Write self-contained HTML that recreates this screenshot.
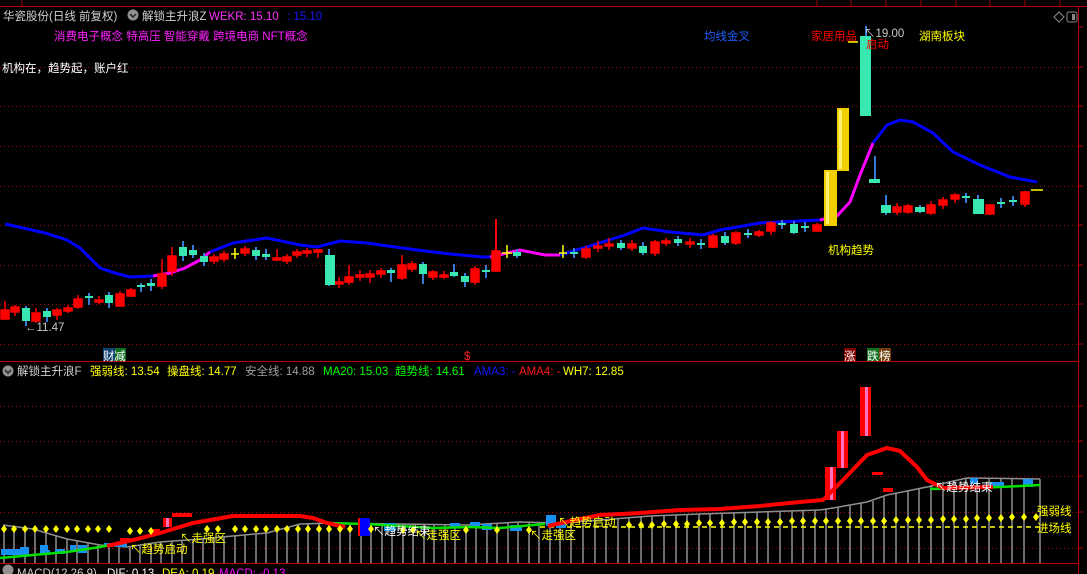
<!DOCTYPE html>
<html><head><meta charset="utf-8"><style>
html,body{margin:0;padding:0;background:#000;width:1087px;height:574px;overflow:hidden}
svg{display:block}
text{font-family:"Liberation Sans","Noto Sans CJK SC","WenQuanYi Zen Hei",sans-serif;font-size:11.5px}
</style></head><body>
<svg width="1087" height="574" viewBox="0 0 1087 574" xmlns="http://www.w3.org/2000/svg">
<rect x="0" y="0" width="1087" height="6" fill="#050505"/>
<line x1="0" y1="6.5" x2="1087" y2="6.5" stroke="#c00000" stroke-width="1"/>
<g stroke="#a00000"><line x1="22" y1="0" x2="22" y2="6"/><line x1="817" y1="0" x2="817" y2="6"/><line x1="851" y1="0" x2="851" y2="6"/><line x1="886" y1="0" x2="886" y2="6"/><line x1="921" y1="0" x2="921" y2="6"/><line x1="956" y1="0" x2="956" y2="6"/><line x1="990" y1="0" x2="990" y2="6"/><line x1="1025" y1="0" x2="1025" y2="6"/><line x1="1060" y1="0" x2="1060" y2="6"/></g>
<line x1="1078.5" y1="7" x2="1078.5" y2="574" stroke="#c00000"/>
<g stroke="#c00000"><line x1="1078" y1="27" x2="1083" y2="27"/><line x1="1078" y1="67" x2="1083" y2="67"/><line x1="1078" y1="106" x2="1083" y2="106"/><line x1="1078" y1="146" x2="1083" y2="146"/><line x1="1078" y1="186" x2="1083" y2="186"/><line x1="1078" y1="225" x2="1083" y2="225"/><line x1="1078" y1="265" x2="1083" y2="265"/><line x1="1078" y1="304" x2="1083" y2="304"/><line x1="1078" y1="344" x2="1083" y2="344"/><line x1="1078" y1="406" x2="1083" y2="406"/><line x1="1078" y1="441" x2="1083" y2="441"/><line x1="1078" y1="476" x2="1083" y2="476"/><line x1="1078" y1="512" x2="1083" y2="512"/><line x1="1078" y1="548" x2="1083" y2="548"/></g>
<g stroke="#a00000" stroke-dasharray="1,3">
<line x1="0" y1="67.5" x2="1078" y2="67.5"/><line x1="0" y1="106.5" x2="1078" y2="106.5"/><line x1="0" y1="146.5" x2="1078" y2="146.5"/><line x1="0" y1="186.5" x2="1078" y2="186.5"/><line x1="0" y1="225.5" x2="1078" y2="225.5"/><line x1="0" y1="265.5" x2="1078" y2="265.5"/><line x1="0" y1="304.5" x2="1078" y2="304.5"/><line x1="0" y1="344.5" x2="1078" y2="344.5"/>
<line x1="0" y1="406.5" x2="1078" y2="406.5"/><line x1="0" y1="441.5" x2="1078" y2="441.5"/><line x1="0" y1="476.5" x2="1078" y2="476.5"/><line x1="0" y1="512.5" x2="1078" y2="512.5"/><line x1="0" y1="548.5" x2="1078" y2="548.5"/>
</g>
<line x1="0" y1="361.5" x2="1078" y2="361.5" stroke="#c00000"/>
<line x1="0" y1="563.5" x2="1078" y2="563.5" stroke="#c00000"/>

<polyline fill="none" stroke="#0000ff" stroke-width="3" points="5,224 23,228 45,233 67,240 80,248 100,268 115,273 130,277 153,276"/>
<polyline fill="none" stroke="#ff00ff" stroke-width="3" points="153,276 170,273 185,268 200,260 210,252"/>
<polyline fill="none" stroke="#0000ff" stroke-width="3" points="210,252 233,243 267,238 300,245 317,247 340,241 367,243 417,250 450,254 483,257 490,257"/>
<polyline fill="none" stroke="#ff00ff" stroke-width="3" points="490,257 520,250 545,255 560,255"/>
<polyline fill="none" stroke="#0000ff" stroke-width="3" points="560,255 593,245 625,235 643,228 670,232 703,235 720,230 760,223 800,221 820,220"/>
<polyline fill="none" stroke="#ff00ff" stroke-width="3" points="820,220 837,216 850,202 860,175 873,143"/>
<polyline fill="none" stroke="#0000ff" stroke-width="3" points="873,143 887,125 900,120 913,122 933,133 953,152 980,165 1010,177 1037,182"/>

<g>
<g fill="#ff0000" stroke="#ff0000" stroke-width="1.5">
<line x1="5" y1="301" x2="5" y2="320"/><rect x="1" y="310" width="8" height="9"/>
<line x1="15" y1="305" x2="15" y2="316"/><rect x="11" y="307" width="8" height="5"/>
<line x1="36" y1="308" x2="36" y2="323"/><rect x="32" y="313" width="8" height="8"/>
<line x1="57" y1="308" x2="57" y2="320"/><rect x="53" y="310" width="8" height="5"/>
<line x1="68" y1="305" x2="68" y2="313"/><rect x="64" y="308" width="8" height="3"/>
<line x1="78" y1="295" x2="78" y2="309"/><rect x="74" y="299" width="8" height="8"/>
<line x1="99" y1="296" x2="99" y2="304"/><rect x="95" y="300" width="8" height="2"/>
<line x1="120" y1="291" x2="120" y2="307"/><rect x="116" y="294" width="8" height="12"/>
<line x1="131" y1="288" x2="131" y2="297"/><rect x="127" y="290" width="8" height="6"/>
<line x1="162" y1="259" x2="162" y2="289"/><rect x="158" y="274" width="8" height="12"/>
<line x1="172" y1="247" x2="172" y2="276"/><rect x="168" y="256" width="8" height="15"/>
<line x1="214" y1="254" x2="214" y2="264"/><rect x="210" y="257" width="8" height="4"/>
<line x1="224" y1="251" x2="224" y2="262"/><rect x="220" y="254" width="8" height="5"/>
<line x1="245" y1="246" x2="245" y2="256"/><rect x="241" y="249" width="8" height="4"/>
<line x1="277" y1="249" x2="277" y2="261"/><rect x="273" y="258" width="8" height="2"/>
<line x1="287" y1="254" x2="287" y2="264"/><rect x="283" y="257" width="8" height="4"/>
<line x1="297" y1="249" x2="297" y2="258"/><rect x="293" y="252" width="8" height="3"/>
<line x1="307" y1="248" x2="307" y2="257"/><rect x="303" y="251" width="8" height="2"/>
<line x1="318" y1="249" x2="318" y2="258"/><rect x="314" y="250" width="8" height="2"/>
<line x1="339" y1="277" x2="339" y2="288"/><rect x="335" y="282" width="8" height="2"/>
<line x1="349" y1="265" x2="349" y2="285"/><rect x="345" y="277" width="8" height="5"/>
<line x1="360" y1="270" x2="360" y2="281"/><rect x="356" y="275" width="8" height="2"/>
<line x1="370" y1="270" x2="370" y2="283"/><rect x="366" y="274" width="8" height="3"/>
<line x1="381" y1="268" x2="381" y2="278"/><rect x="377" y="271" width="8" height="3"/>
<line x1="402" y1="255" x2="402" y2="280"/><rect x="398" y="265" width="8" height="13"/>
<line x1="412" y1="261" x2="412" y2="272"/><rect x="408" y="264" width="8" height="5"/>
<line x1="433" y1="270" x2="433" y2="280"/><rect x="429" y="272" width="8" height="5"/>
<line x1="444" y1="271" x2="444" y2="279"/><rect x="440" y="275" width="8" height="2"/>
<line x1="475" y1="266" x2="475" y2="285"/><rect x="471" y="269" width="8" height="13"/>
<line x1="496" y1="219" x2="496" y2="272"/><rect x="492" y="251" width="8" height="20"/>
<line x1="586" y1="246" x2="586" y2="259"/><rect x="582" y="249" width="8" height="8"/>
<line x1="598" y1="241" x2="598" y2="252"/><rect x="594" y="246" width="8" height="2"/>
<line x1="609" y1="238" x2="609" y2="250"/><rect x="605" y="244" width="8" height="2"/>
<line x1="632" y1="240" x2="632" y2="251"/><rect x="628" y="244" width="8" height="4"/>
<line x1="655" y1="240" x2="655" y2="256"/><rect x="651" y="242" width="8" height="11"/>
<line x1="666" y1="238" x2="666" y2="246"/><rect x="662" y="241" width="8" height="2"/>
<line x1="690" y1="238" x2="690" y2="248"/><rect x="686" y="242" width="8" height="2"/>
<line x1="713" y1="234" x2="713" y2="248"/><rect x="709" y="236" width="8" height="11"/>
<line x1="736" y1="231" x2="736" y2="245"/><rect x="732" y="233" width="8" height="10"/>
<line x1="759" y1="230" x2="759" y2="237"/><rect x="755" y="232" width="8" height="3"/>
<line x1="771" y1="221" x2="771" y2="235"/><rect x="767" y="223" width="8" height="8"/>
<line x1="817" y1="223" x2="817" y2="228"/><rect x="813" y="225" width="8" height="6"/>
<line x1="897" y1="203" x2="897" y2="215"/><rect x="893" y="207" width="8" height="5"/>
<line x1="908" y1="204" x2="908" y2="214"/><rect x="904" y="206" width="8" height="6"/>
<line x1="931" y1="201" x2="931" y2="215"/><rect x="927" y="205" width="8" height="8"/>
<line x1="943" y1="197" x2="943" y2="209"/><rect x="939" y="200" width="8" height="5"/>
<line x1="955" y1="193" x2="955" y2="203"/><rect x="951" y="195" width="8" height="4"/>
<line x1="990" y1="204" x2="990" y2="215"/><rect x="986" y="205" width="8" height="9"/>
<line x1="1025" y1="191" x2="1025" y2="207"/><rect x="1021" y="192" width="8" height="12"/>
</g>
<line x1="496" y1="219" x2="496" y2="251" stroke="#ff0000" stroke-width="2"/>
<g stroke="#3878d8" stroke-width="2">
<line x1="26" y1="306" x2="26" y2="326"/><line x1="47" y1="308" x2="47" y2="322"/><line x1="89" y1="293" x2="89" y2="305"/><line x1="109" y1="292" x2="109" y2="308"/><line x1="141" y1="283" x2="141" y2="292"/><line x1="151" y1="279" x2="151" y2="291"/><line x1="183" y1="241" x2="183" y2="261"/><line x1="193" y1="245" x2="193" y2="258"/><line x1="204" y1="253" x2="204" y2="266"/><line x1="256" y1="247" x2="256" y2="260"/><line x1="266" y1="249" x2="266" y2="260"/><line x1="329" y1="249" x2="329" y2="286"/><line x1="391" y1="268" x2="391" y2="282"/><line x1="423" y1="262" x2="423" y2="284"/><line x1="454" y1="264" x2="454" y2="277"/><line x1="465" y1="273" x2="465" y2="287"/><line x1="486" y1="265" x2="486" y2="278"/><line x1="517" y1="249" x2="517" y2="258"/><line x1="574" y1="248" x2="574" y2="258"/><line x1="621" y1="240" x2="621" y2="250"/><line x1="643" y1="242" x2="643" y2="255"/><line x1="678" y1="236" x2="678" y2="246"/><line x1="701" y1="239" x2="701" y2="249"/><line x1="725" y1="232" x2="725" y2="245"/><line x1="748" y1="229" x2="748" y2="238"/><line x1="782" y1="220" x2="782" y2="229"/><line x1="794" y1="221" x2="794" y2="234"/><line x1="805" y1="222" x2="805" y2="232"/><line x1="866" y1="26" x2="866" y2="116"/><line x1="875" y1="156" x2="875" y2="183"/><line x1="886" y1="195" x2="886" y2="215"/><line x1="920" y1="205" x2="920" y2="213"/><line x1="966" y1="193" x2="966" y2="203"/><line x1="978" y1="195" x2="978" y2="214"/><line x1="1001" y1="198" x2="1001" y2="208"/><line x1="1013" y1="196" x2="1013" y2="206"/>
</g>
<g fill="#38e8b0">
<rect x="22" y="308" width="8" height="13"/><rect x="43" y="311" width="8" height="6"/><rect x="85" y="296" width="8" height="2"/><rect x="105" y="295" width="8" height="8"/><rect x="137" y="285" width="8" height="2"/><rect x="147" y="283" width="8" height="3"/><rect x="179" y="247" width="8" height="9"/><rect x="189" y="250" width="8" height="5"/><rect x="200" y="256" width="8" height="6"/><rect x="252" y="250" width="8" height="6"/><rect x="262" y="254" width="8" height="3"/><rect x="325" y="255" width="10" height="30"/><rect x="387" y="270" width="8" height="3"/><rect x="419" y="264" width="8" height="10"/><rect x="450" y="272" width="8" height="4"/><rect x="461" y="276" width="8" height="6"/><rect x="482" y="270" width="8" height="2"/><rect x="513" y="252" width="8" height="4"/><rect x="570" y="252" width="8" height="2"/><rect x="617" y="243" width="8" height="5"/><rect x="639" y="246" width="8" height="7"/><rect x="674" y="239" width="8" height="4"/><rect x="697" y="243" width="8" height="2"/><rect x="721" y="236" width="8" height="7"/><rect x="744" y="233" width="8" height="2"/><rect x="778" y="223" width="8" height="2"/><rect x="790" y="224" width="8" height="9"/><rect x="801" y="226" width="8" height="2"/><rect x="860" y="36" width="11" height="80"/><rect x="869" y="179" width="11" height="4"/><rect x="881" y="205" width="10" height="8"/><rect x="915" y="207" width="10" height="5"/><rect x="962" y="196" width="8" height="2"/><rect x="973" y="199" width="11" height="15"/><rect x="997" y="202" width="8" height="2"/><rect x="1009" y="200" width="8" height="2"/>
</g>
<g stroke="#ffff00" stroke-width="1.5"><line x1="235" y1="248" x2="235" y2="259"/><line x1="231" y1="254" x2="239" y2="254"/><line x1="507" y1="245" x2="507" y2="258"/><line x1="502" y1="253" x2="512" y2="253"/><line x1="563" y1="245" x2="563" y2="258"/><line x1="559" y1="253" x2="567" y2="253"/><line x1="1031" y1="190" x2="1043" y2="190"/></g>
<rect x="824" y="170" width="13" height="56" fill="#f0d000"/>
<rect x="837" y="108" width="12" height="63" fill="#f0d000"/>
<rect x="826" y="172" width="3" height="52" fill="#fff070"/>
<rect x="839" y="110" width="3" height="59" fill="#fff070"/>
</g>

<text x="3" y="20" fill="#d0d0d0">华瓷股份(日线 前复权)</text>
<circle cx="133" cy="15" r="5.5" fill="#909090"/><path d="M130 14 l3 3 l3 -3" stroke="#222" fill="none" stroke-width="1.5"/>
<text x="142" y="20" fill="#d0d0d0">解锁主升浪Z</text>
<text x="209" y="20" fill="#ff30ff">WEKR: 15.10</text>
<text x="287" y="20" fill="#1818ff">: 15.10</text>
<text x="54" y="40" fill="#ff20ff">消费电子概念 特高压 智能穿戴 跨境电商 NFT概念</text>
<text x="2" y="72" fill="#ffffff">机构在，趋势起，账户红</text>
<text x="704" y="40" fill="#2060ff">均线金叉</text>
<text x="811" y="40" fill="#ff0000">家居用品</text>
<text x="864" y="37" fill="#c8c8c8">↖19.00</text>
<text x="866" y="48" fill="#ff0000">启动</text>
<line x1="848" y1="42" x2="858" y2="42" stroke="#ffff00" stroke-width="1.5"/>
<text x="919" y="40" fill="#ffff00">湖南板块</text>
<text x="828" y="254" fill="#ffff00">机构趋势</text>
<text x="25" y="331" fill="#c8c8c8">←11.47</text>
<path d="M1054 17 l5 -5 l5 5 l-5 5z" fill="none" stroke="#888" stroke-width="1"/>
<rect x="1067" y="12" width="10" height="10" rx="2" fill="none" stroke="#888"/><rect x="1072" y="14" width="3" height="6" fill="#888"/>
<rect x="103" y="348" width="12" height="13" fill="#104070"/><text x="103" y="360" fill="#fff" style="font-size:11.5px">财</text>
<rect x="115" y="348" width="11" height="13" fill="#107020"/><text x="114" y="360" fill="#fff" style="font-size:11.5px">减</text>
<text x="464" y="360" fill="#ff2020">$</text>
<rect x="844" y="348" width="12" height="13" fill="#800000"/><text x="844" y="360" fill="#fff">涨</text>
<rect x="867" y="348" width="12" height="13" fill="#107020"/><text x="867" y="360" fill="#fff">跌</text>
<rect x="879" y="348" width="12" height="13" fill="#704010"/><text x="879" y="360" fill="#fff">榜</text>

<circle cx="8" cy="371" r="5.5" fill="#909090"/><path d="M5 370 l3 3 l3 -3" stroke="#222" fill="none" stroke-width="1.5"/>
<text x="17" y="375" fill="#d0d0d0">解锁主升浪F</text>
<text x="90" y="375" fill="#ffff00">强弱线: 13.54</text>
<text x="167" y="375" fill="#ffff00">操盘线: 14.77</text>
<text x="245" y="375" fill="#a0a0a0">安全线: 14.88</text>
<text x="323" y="375" fill="#00ff00">MA20: 15.03</text>
<text x="395" y="375" fill="#00ff00">趋势线: 14.61</text>
<text x="474" y="375" fill="#1818ff">AMA3: -</text>
<text x="519" y="375" fill="#ff1818">AMA4: -</text>
<text x="563" y="375" fill="#ffff00">WH7: 12.85</text>

<g stroke="#909090" stroke-width="1.5">
<line x1="4" y1="525" x2="4" y2="563"/><line x1="14" y1="526" x2="14" y2="563"/><line x1="25" y1="528" x2="25" y2="563"/><line x1="35" y1="529" x2="35" y2="563"/><line x1="46" y1="532" x2="46" y2="563"/><line x1="56" y1="535" x2="56" y2="563"/><line x1="67" y1="539" x2="67" y2="563"/><line x1="77" y1="541" x2="77" y2="563"/><line x1="88" y1="543" x2="88" y2="563"/><line x1="98" y1="545" x2="98" y2="563"/><line x1="109" y1="546" x2="109" y2="563"/><line x1="119" y1="547" x2="119" y2="563"/><line x1="130" y1="547" x2="130" y2="563"/><line x1="140" y1="545" x2="140" y2="563"/><line x1="151" y1="544" x2="151" y2="563"/><line x1="161" y1="542" x2="161" y2="563"/><line x1="172" y1="541" x2="172" y2="563"/><line x1="182" y1="540" x2="182" y2="563"/><line x1="193" y1="539" x2="193" y2="563"/><line x1="203" y1="539" x2="203" y2="563"/><line x1="214" y1="538" x2="214" y2="563"/><line x1="224" y1="537" x2="224" y2="563"/><line x1="235" y1="536" x2="235" y2="563"/><line x1="245" y1="535" x2="245" y2="563"/><line x1="256" y1="534" x2="256" y2="563"/><line x1="266" y1="533" x2="266" y2="563"/><line x1="277" y1="531" x2="277" y2="563"/><line x1="287" y1="528" x2="287" y2="563"/><line x1="298" y1="525" x2="298" y2="563"/><line x1="308" y1="524" x2="308" y2="563"/><line x1="319" y1="523" x2="319" y2="563"/><line x1="329" y1="523" x2="329" y2="563"/><line x1="340" y1="523" x2="340" y2="563"/><line x1="350" y1="524" x2="350" y2="563"/><line x1="361" y1="524" x2="361" y2="563"/><line x1="371" y1="524" x2="371" y2="563"/><line x1="382" y1="524" x2="382" y2="563"/><line x1="392" y1="524" x2="392" y2="563"/><line x1="403" y1="524" x2="403" y2="563"/><line x1="413" y1="524" x2="413" y2="563"/><line x1="424" y1="524" x2="424" y2="563"/><line x1="434" y1="525" x2="434" y2="563"/><line x1="445" y1="525" x2="445" y2="563"/><line x1="455" y1="525" x2="455" y2="563"/><line x1="466" y1="525" x2="466" y2="563"/><line x1="476" y1="525" x2="476" y2="563"/><line x1="487" y1="525" x2="487" y2="563"/><line x1="497" y1="524" x2="497" y2="563"/><line x1="508" y1="523" x2="508" y2="563"/><line x1="518" y1="522" x2="518" y2="563"/><line x1="529" y1="522" x2="529" y2="563"/><line x1="539" y1="522" x2="539" y2="563"/><line x1="550" y1="522" x2="550" y2="563"/><line x1="560" y1="523" x2="560" y2="563"/><line x1="571" y1="523" x2="571" y2="563"/><line x1="583" y1="522" x2="583" y2="563"/><line x1="595" y1="521" x2="595" y2="563"/><line x1="606" y1="520" x2="606" y2="563"/><line x1="618" y1="519" x2="618" y2="563"/><line x1="629" y1="518" x2="629" y2="563"/><line x1="641" y1="517" x2="641" y2="563"/><line x1="652" y1="516" x2="652" y2="563"/><line x1="664" y1="515" x2="664" y2="563"/><line x1="676" y1="515" x2="676" y2="563"/><line x1="687" y1="514" x2="687" y2="563"/><line x1="699" y1="514" x2="699" y2="563"/><line x1="710" y1="513" x2="710" y2="563"/><line x1="722" y1="513" x2="722" y2="563"/><line x1="734" y1="513" x2="734" y2="563"/><line x1="745" y1="512" x2="745" y2="563"/><line x1="757" y1="512" x2="757" y2="563"/><line x1="768" y1="512" x2="768" y2="563"/><line x1="780" y1="511" x2="780" y2="563"/><line x1="792" y1="511" x2="792" y2="563"/><line x1="803" y1="510" x2="803" y2="563"/><line x1="815" y1="510" x2="815" y2="563"/><line x1="826" y1="509" x2="826" y2="563"/><line x1="838" y1="508" x2="838" y2="563"/><line x1="850" y1="506" x2="850" y2="563"/><line x1="861" y1="503" x2="861" y2="563"/><line x1="873" y1="501" x2="873" y2="563"/><line x1="884" y1="497" x2="884" y2="563"/><line x1="896" y1="493" x2="896" y2="563"/><line x1="908" y1="490" x2="908" y2="563"/><line x1="919" y1="488" x2="919" y2="563"/><line x1="931" y1="485" x2="931" y2="563"/><line x1="943" y1="482" x2="943" y2="563"/><line x1="954" y1="480" x2="954" y2="563"/><line x1="966" y1="478" x2="966" y2="563"/><line x1="977" y1="478" x2="977" y2="563"/><line x1="989" y1="478" x2="989" y2="563"/><line x1="1001" y1="478" x2="1001" y2="563"/><line x1="1012" y1="478" x2="1012" y2="563"/><line x1="1024" y1="479" x2="1024" y2="563"/><line x1="1040" y1="479" x2="1040" y2="563"/>
</g>
<polyline fill="none" stroke="#909090" stroke-width="1.5" points="3,525 33,529 67,539 100,545 127,547 160,542 200,539 233,536 267,533 300,524 333,523 400,524 467,525 520,522 560,523 600,520 650,516 700,514 760,512 820,510 833,508 867,502 887,495 927,487 967,478 1040,479"/>
<line x1="540" y1="527" x2="1040" y2="527" stroke="#ffff00" stroke-width="1.5" stroke-dasharray="5,4"/>
<g fill="#1890f0">
<rect x="1" y="549" width="20" height="6"/><rect x="20" y="547" width="9" height="8"/><rect x="40" y="550" width="10" height="5"/><rect x="55" y="549" width="10" height="5"/><rect x="70" y="545" width="6" height="5"/><rect x="78" y="545" width="9" height="8"/><rect x="104" y="543" width="8" height="4"/><rect x="115" y="542" width="12" height="5"/><rect x="40" y="545" width="8" height="6"/>
<rect x="384" y="523" width="12" height="8"/><rect x="450" y="523" width="10" height="5"/><rect x="470" y="522" width="10" height="5"/><rect x="482" y="524" width="10" height="6"/><rect x="510" y="525" width="12" height="6"/><rect x="546" y="515" width="10" height="11"/><rect x="556" y="524" width="10" height="4"/>
<rect x="970" y="478" width="8" height="6"/><rect x="990" y="482" width="14" height="4"/><rect x="1023" y="479" width="10" height="8"/>
</g>
<polyline fill="none" stroke="#00e000" stroke-width="2.5" points="0,558 33,555 67,552 100,547 110,545"/>
<polyline fill="none" stroke="#00e000" stroke-width="2.5" points="327,523 367,524 400,526 433,528 470,527 500,528 545,524"/>
<polyline fill="none" stroke="#00e000" stroke-width="2.5" points="930,489 965,488 1000,487 1040,485"/>
<g fill="#ff0000">
<rect x="120" y="538" width="10" height="5"/><rect x="152" y="529" width="8" height="6"/><rect x="163" y="518" width="9" height="9"/><rect x="172" y="513" width="10" height="4"/><rect x="182" y="513" width="10" height="4"/>
<rect x="825" y="467" width="11" height="33"/><rect x="837" y="431" width="11" height="37"/><rect x="860" y="387" width="11" height="49"/><rect x="872" y="472" width="11" height="3"/><rect x="883" y="488" width="10" height="4"/>
</g>
<g fill="#ff70c0"><rect x="865" y="387" width="3" height="49"/><rect x="830" y="467" width="3" height="33"/><rect x="841" y="431" width="3" height="37"/><rect x="166" y="518" width="3" height="9"/></g>
<rect x="360" y="518" width="10" height="18" fill="#0000ff"/><rect x="358" y="518" width="2" height="18" fill="#ff0000"/>
<polyline fill="none" stroke="#ff0000" stroke-width="4" points="107,546 133,540 160,533 193,523 233,516 300,516 313,518 327,523 345,527"/>
<polyline fill="none" stroke="#ff0000" stroke-width="4" points="548,526 575,520 600,515 640,513 680,510 720,509 760,506 800,502 823,500 843,480 867,455 887,448 900,451 917,467 927,480 943,488 993,487"/>
<g fill="#ffff00">
<path d="M4 525l3 4l-3 4l-3-4z"/><path d="M14 525l3 4l-3 4l-3-4z"/><path d="M25 525l3 4l-3 4l-3-4z"/><path d="M35 525l3 4l-3 4l-3-4z"/><path d="M46 525l3 4l-3 4l-3-4z"/><path d="M56 525l3 4l-3 4l-3-4z"/><path d="M67 525l3 4l-3 4l-3-4z"/><path d="M77 525l3 4l-3 4l-3-4z"/><path d="M88 525l3 4l-3 4l-3-4z"/><path d="M98 525l3 4l-3 4l-3-4z"/><path d="M109 525l3 4l-3 4l-3-4z"/><path d="M130 527l3 4l-3 4l-3-4z"/><path d="M140 527l3 4l-3 4l-3-4z"/><path d="M151 527l3 4l-3 4l-3-4z"/><path d="M207 525l3 4l-3 4l-3-4z"/><path d="M218 525l3 4l-3 4l-3-4z"/><path d="M235 525l3 4l-3 4l-3-4z"/><path d="M245 525l3 4l-3 4l-3-4z"/><path d="M256 525l3 4l-3 4l-3-4z"/><path d="M266 525l3 4l-3 4l-3-4z"/><path d="M277 525l3 4l-3 4l-3-4z"/><path d="M287 525l3 4l-3 4l-3-4z"/><path d="M298 525l3 4l-3 4l-3-4z"/><path d="M308 525l3 4l-3 4l-3-4z"/><path d="M319 525l3 4l-3 4l-3-4z"/><path d="M329 525l3 4l-3 4l-3-4z"/><path d="M340 525l3 4l-3 4l-3-4z"/><path d="M350 525l3 4l-3 4l-3-4z"/><path d="M371 525l3 4l-3 4l-3-4z"/><path d="M403 526l3 4l-3 4l-3-4z"/><path d="M413 526l3 4l-3 4l-3-4z"/><path d="M466 526l3 4l-3 4l-3-4z"/><path d="M497 526l3 4l-3 4l-3-4z"/><path d="M529 526l3 4l-3 4l-3-4z"/>
<path d="M629 521l3 4l-3 4l-3-4z"/><path d="M641 521l3 4l-3 4l-3-4z"/><path d="M652 521l3 4l-3 4l-3-4z"/><path d="M664 520l3 4l-3 4l-3-4z"/><path d="M676 520l3 4l-3 4l-3-4z"/><path d="M687 520l3 4l-3 4l-3-4z"/><path d="M699 519l3 4l-3 4l-3-4z"/><path d="M710 519l3 4l-3 4l-3-4z"/><path d="M722 519l3 4l-3 4l-3-4z"/><path d="M734 518l3 4l-3 4l-3-4z"/><path d="M745 518l3 4l-3 4l-3-4z"/><path d="M757 518l3 4l-3 4l-3-4z"/><path d="M768 518l3 4l-3 4l-3-4z"/><path d="M780 518l3 4l-3 4l-3-4z"/><path d="M792 517l3 4l-3 4l-3-4z"/><path d="M803 517l3 4l-3 4l-3-4z"/><path d="M815 517l3 4l-3 4l-3-4z"/><path d="M826 517l3 4l-3 4l-3-4z"/><path d="M838 517l3 4l-3 4l-3-4z"/><path d="M850 517l3 4l-3 4l-3-4z"/><path d="M861 517l3 4l-3 4l-3-4z"/><path d="M873 517l3 4l-3 4l-3-4z"/><path d="M884 517l3 4l-3 4l-3-4z"/><path d="M896 516l3 4l-3 4l-3-4z"/><path d="M908 516l3 4l-3 4l-3-4z"/><path d="M919 516l3 4l-3 4l-3-4z"/><path d="M931 516l3 4l-3 4l-3-4z"/><path d="M943 515l3 4l-3 4l-3-4z"/><path d="M954 515l3 4l-3 4l-3-4z"/><path d="M966 515l3 4l-3 4l-3-4z"/><path d="M977 514l3 4l-3 4l-3-4z"/><path d="M989 514l3 4l-3 4l-3-4z"/><path d="M1001 514l3 4l-3 4l-3-4z"/><path d="M1012 513l3 4l-3 4l-3-4z"/><path d="M1024 513l3 4l-3 4l-3-4z"/><path d="M1036 513l3 4l-3 4l-3-4z"/>
</g>
<text x="130" y="553" fill="#ffff00">↖趋势启动</text>
<text x="180" y="542" fill="#ffff00">↖走强区</text>
<text x="373" y="535" fill="#ffffff">↖趋势结束</text>
<text x="415" y="539" fill="#ffff00">↖走强区</text>
<text x="530" y="539" fill="#ffff00">↖走强区</text>
<text x="558" y="526" fill="#ffff00">↖趋势启动</text>
<text x="935" y="491" fill="#ffffff">↖趋势结束</text>
<text x="1037" y="515" fill="#ffff00">强弱线</text>
<text x="1037" y="532" fill="#ffff00">进场线</text>

<circle cx="8" cy="570" r="5.5" fill="#909090"/>
<text x="17" y="577" fill="#d0d0d0">MACD(12,26,9)</text>
<text x="107" y="577" fill="#ffffff">DIF: 0.13</text>
<text x="162" y="577" fill="#ffff00">DEA: 0.19</text>
<text x="219" y="577" fill="#ff00ff">MACD: -0.13</text>
</svg>
</body></html>
